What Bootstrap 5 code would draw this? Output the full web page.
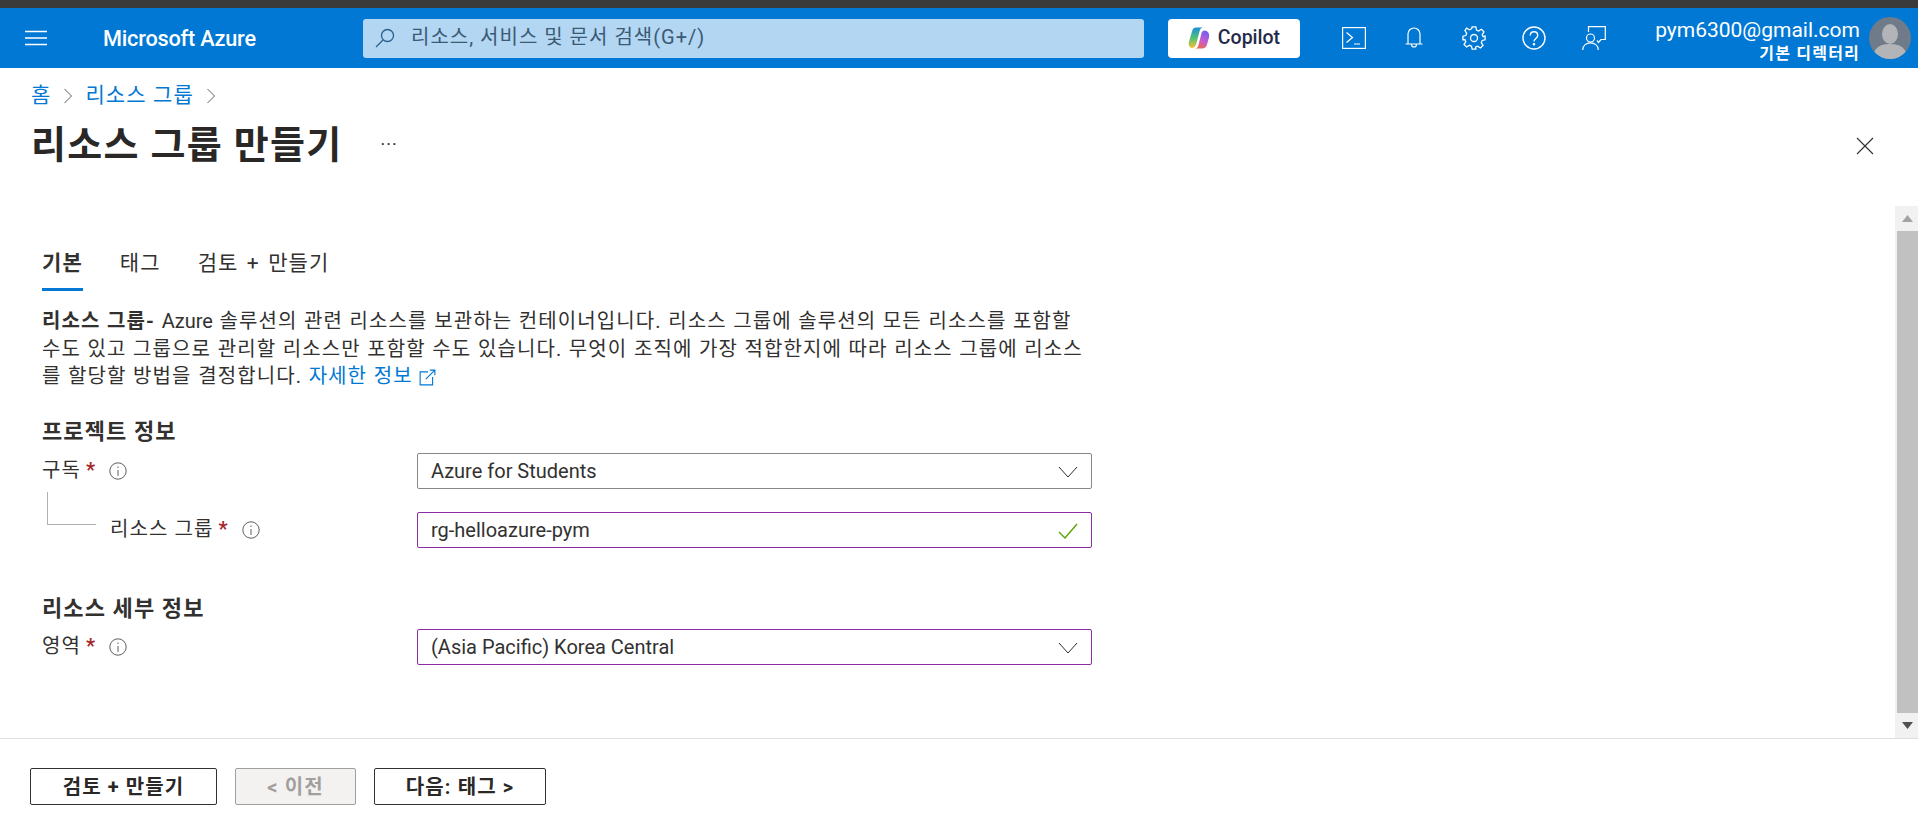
<!DOCTYPE html>
<html lang="ko">
<head>
    <meta charset="UTF-8">
    <meta name="viewport" content="width=device-width, initial-scale=1.0">
    <title>리소스 그룹 만들기</title>
    <link href="https://cdn.jsdelivr.net/npm/bootstrap@5.3.3/dist/css/bootstrap.min.css" rel="stylesheet">
    <style>
        html, body { height: 100%; overflow: hidden; }
        body {
            font-family: Roboto, "Noto Sans CJK KR", sans-serif;
            font-size: 20px;
            letter-spacing: 1.1px;
            line-height: 27.5px;
            color: #323130;
            background: #fff;
            border-top: 8px solid #3a3a3a;
        }
        .az-page { height: 823px; }

        /* top bar */
        .az-bar { height: 60px; background: #0078d4; padding: 0; color: #fff; flex-wrap: nowrap; }
        .az-menu { width: 103px; padding-left: 25px; }
        .az-brand { width: 260px; font-size: 21.7px; font-weight: 500; color: #fff; padding: 2px 0 0; margin: 0; letter-spacing: -.2px; }
        .az-search {
            width: 781px; height: 39px; background: #b3d6f2; border-radius: 3px;
            padding: 0 12px; color: #3b5a75; letter-spacing: 1px;
        }
        .az-copilot {
            width: 132px; height: 39px; margin-left: 24px; background: #fff; border: 0; border-radius: 4px;
            color: #242a4a; font-size: 19.5px; font-weight: 500; padding: 0; letter-spacing: 0;
        }
        .az-tools { margin-left: 24px; gap: 0; }
        .az-tool { width: 60px; height: 60px; }
        .az-user { width: 218px; padding-right: 7px; letter-spacing: 0; }
        .az-user-text { line-height: 23px; margin-right: 9px; padding-top: 7px; }
        .az-mail { font-size: 21px; }
        .az-dir { font-size: 16px; font-weight: 700; letter-spacing: 1.2px; }
        .az-avatar { width: 42px; height: 42px; border-radius: 50%; overflow: hidden; }

        /* title block */
        .az-head { height: 138px; padding: 14px 31px 0; position: relative; }
        .az-crumbs { margin: 0; font-size: 21px; }
        .az-crumbs a, .az-more-link { color: #0078d4; text-decoration: none; }
        .az-sep { margin: 0 12px; }
        .az-title { font-size: 38px; font-weight: 700; line-height: 44px; margin: 13px 0 0; color: #292827; letter-spacing: 1.3px; }
        .az-dots { margin-left: 38px; font-size: 18px; font-weight: 400; color: #323130; letter-spacing: 1px; }
        .az-close { position: absolute; right: 44px; top: 69px; }

        /* scrolling part */
        .az-scroll { height: 532px; }
        .az-body { padding: 0 0 0 42px; width: 1092px; flex: none; }
        .az-tabs { padding-top: 44px; gap: 37px; height: 85px; margin-bottom: 17px; font-size: 21px; word-spacing: 2px; }
        .az-tab { color: #323130; height: 41px; }
        .az-tab-on { font-weight: 700; border-bottom: 3px solid #0078d4; height: 41px; }
        .az-intro { margin: 0; width: 1048px; word-spacing: .5px; }
        .az-latin { letter-spacing: 0; }
        .az-section { font-size: 22px; font-weight: 700; margin: 0; line-height: 27.5px; color: #323130; letter-spacing: 1.1px; }
        .az-section-1 { margin-top: 27px; margin-bottom: 8px; }
        .az-section-2 { margin-top: 47px; margin-bottom: 6px; }
        .az-line { display: flex; align-items: center; }
        .az-line-2 { margin-top: 23px; }
        .az-label { width: 375px; flex: none; display: flex; align-items: center; gap: 5px; }
        .az-star { color: #a4262c; font-weight: 700; margin-right: 9px; letter-spacing: 0; }
        .az-field {
            width: 675px; height: 36px; border: 1px solid #8a8886; border-radius: 2px;
            color: #323130; padding: 0 13px; line-height: 34px; position: relative; background: #fff; letter-spacing: 0;
        }
        .az-valid { border-color: #8a2da5; }
        .az-field svg { position: absolute; right: 13px; top: 9px; }
        .az-child { padding-left: 68px; }
        .az-tree { position: relative; }
        .az-tree::before {
            content: ""; position: absolute; left: 5px; top: -20px; width: 49px; height: 33px;
            border-left: 1px solid #b3b0ad; border-bottom: 1px solid #b3b0ad;
        }
        .az-rail { width: 23px; margin-left: auto; background: #f1f1f1; flex: none; padding-left: 2px; }
        .az-thumb { flex: 1; background: #c1c1c1; }
        .az-arrow { height: 25px; }

        /* footer */
        .az-foot { border-top: 1px solid #e1dfdd; padding: 29px 30px 0; gap: 18px; height: 85px; }
        .az-btn {
            height: 37px; padding: 0; font-size: 20px; font-weight: 700; color: #292827; letter-spacing: 1.1px;
            border: 1px solid #323130; border-radius: 2px; line-height: 34px; background: #fff;
        }
        .az-btn:disabled { background: #f3f2f1; color: #a19f9d; border-color: #a19f9d; opacity: 1; }
        .az-w1 { width: 187px; }
        .az-w2 { width: 121px; }
        .az-w3 { width: 172px; }
    </style>
</head>
<body>
<div class="az-page d-flex flex-column">
    <nav class="navbar az-bar">
        <div class="az-menu d-flex align-items-center">
            <svg width="22" height="16" viewBox="0 0 22 16" fill="none" stroke="#fff" stroke-width="1.4"><path d="M0 1.500h22M0 8h22M0 14.500h22"/></svg>
        </div>
        <div class="az-brand">Microsoft Azure</div>
        <div class="az-search d-flex align-items-center gap-2">
            <svg width="20" height="20" viewBox="0 0 20 20" fill="none" stroke="#2b5f8a" stroke-width="1.3"><circle cx="12.500" cy="7.500" r="6"/><path d="M8 12 1 19"/></svg>
            <span class="ms-2">리소스, 서비스 및 문서 검색(G+/)</span>
        </div>
        <button class="az-copilot d-flex align-items-center justify-content-center gap-2" type="button">
            <svg width="22" height="22" viewBox="0 0 22 22">
                <defs>
                    <linearGradient id="cpA" x1="0" y1="0" x2="0" y2="1"><stop offset="0" stop-color="#1b8fd8"/><stop offset=".5" stop-color="#4fc07a"/><stop offset="1" stop-color="#f5c330"/></linearGradient>
                    <linearGradient id="cpB" x1=".7" y1="0" x2=".3" y2="1"><stop offset="0" stop-color="#6b62ea"/><stop offset=".55" stop-color="#c85bd0"/><stop offset="1" stop-color="#f0684a"/></linearGradient>
                </defs>
                <path fill="url(#cpA)" d="M8 .5h7c-1.800.4-2.800 1.500-3.300 3.200L8.500 16c-.6 2.800-2 5-4.500 5-2.500 0-4-3-3-6.500L4 4.500C4.600 2 6 .5 8 .5z"/>
                <path fill="url(#cpB)" d="M13.500 6c.5-1.500 1.500-2.500 3-2.500 3 0 5.500 3 4.500 7l-2 7c-.7 2.500-2.500 4-5 4H7c2 0 3-1.500 3.500-3.500z"/>
            </svg>
            Copilot
        </button>
        <div class="az-tools d-flex">
            <div class="az-tool d-flex align-items-center justify-content-center">
                <svg width="24" height="22" viewBox="0 0 24 22" fill="none" stroke="#fff" stroke-width="1.2"><rect x=".6" y=".6" width="22.800" height="20.800"/><path d="m4.500 5.500 6 5-6 5M12 17h6"/></svg>
            </div>
            <div class="az-tool d-flex align-items-center justify-content-center">
                <svg width="18" height="22" viewBox="0 0 18 22" fill="none" stroke="#fff" stroke-width="1.200"><path d="M3 16.500V7a6 6 0 0 1 12 0v9.500M.5 17h17M6.500 17.500c0 3.300 5 3.300 5 0"/></svg>
            </div>
            <div class="az-tool d-flex align-items-center justify-content-center">
                <svg width="24" height="24" viewBox="0 0 26 26" fill="none" stroke="#fff" stroke-width="1.400"><circle cx="13" cy="13" r="3.800"/><path d="M11 1h4l.7 3.400 2.300 1 3-1.900 2.800 2.800-1.900 3 1 2.300L25 11v4l-3.100.7-1 2.300 1.900 3-2.800 2.800-3-1.900-2.300 1L15 25h-4l-.7-3.100-2.300-1-3 1.900-2.800-2.800 1.900-3-1-2.300L1 15v-4l3.100-.7 1-2.300-1.900-3L5 2.200l3 1.900 2.300-1z"/></svg>
            </div>
            <div class="az-tool d-flex align-items-center justify-content-center">
                <svg width="24" height="24" viewBox="0 0 24 24" fill="none" stroke="#fff" stroke-width="1.400"><circle cx="12" cy="12" r="11"/><path d="M8.300 9.500c0-5 7.400-5 7.400 0 0 3-3.700 3-3.700 6"/><circle cx="12" cy="18.300" r=".6" fill="#fff"/></svg>
            </div>
            <div class="az-tool d-flex align-items-center justify-content-center">
                <svg width="24" height="24" viewBox="0 0 24 24" fill="none" stroke="#fff" stroke-width="1.200"><path d="M6.500 6V.7h16.800v12.800H19l-2.500 3-1.500-2.200"/><circle cx="8.500" cy="12" r="4"/><path d="M.7 24c0-9.500 15.600-9.500 15.600 0"/></svg>
            </div>
        </div>
        <div class="az-user d-flex align-items-center justify-content-end ms-auto">
            <div class="az-user-text text-end">
                <div class="az-mail">pym6300@gmail.com</div>
                <div class="az-dir">기본 디렉터리</div>
            </div>
            <div class="az-avatar flex-shrink-0">
                <svg width="42" height="42" viewBox="0 0 42 42"><rect width="42" height="42" fill="#6f7b89"/><ellipse cx="21" cy="17" rx="8" ry="10" fill="#b2b4b7"/><path d="M4 42c0-12 8-15 17-15s17 3 17 15z" fill="#b2b4b7"/></svg>
            </div>
        </div>
    </nav>

    <header class="az-head">
        <nav aria-label="breadcrumb" class="az-crumbs d-flex align-items-center">
            <a href="#">홈</a>
            <svg class="az-sep" width="10" height="16" viewBox="0 0 10 16" fill="none" stroke="#605e5c"><path d="m1.500 1 7 7-7 7"/></svg>
            <a href="#">리소스 그룹</a>
            <svg class="az-sep" width="10" height="16" viewBox="0 0 10 16" fill="none" stroke="#605e5c"><path d="m1.500 1 7 7-7 7"/></svg>
        </nav>
        <h1 class="az-title d-flex align-items-center">리소스 그룹 만들기<span class="az-dots">···</span></h1>
        <svg class="az-close" width="18" height="18" viewBox="0 0 18 18" fill="none" stroke="#323130" stroke-width="1.100"><path d="m1 1 16 16M17 1 1 17"/></svg>
    </header>

    <div class="az-scroll d-flex">
        <main class="az-body">
            <div class="az-tabs d-flex">
                <div class="az-tab-on">기본</div>
                <div class="az-tab">태그</div>
                <div class="az-tab">검토 + 만들기</div>
            </div>
            <p class="az-intro"><strong>리소스 그룹-</strong> <span class="az-latin">Azure</span> 솔루션의 관련 리소스를 보관하는 컨테이너입니다. 리소스 그룹에 솔루션의 모든 리소스를 포함할 수도 있고 그룹으로 관리할 리소스만 포함할 수도 있습니다. 무엇이 조직에 가장 적합한지에 따라 리소스 그룹에 리소스를 할당할 방법을 결정합니다. <a class="az-more-link" href="#">자세한 정보 <svg width="17" height="17" viewBox="0 0 15 15" fill="none" stroke="#0078d4"><path d="M8 2.500H1v11.500h11V7M6 9l8-8M9.500 1H14v4.500"/></svg></a></p>

            <h2 class="az-section az-section-1">프로젝트 정보</h2>
            <div class="az-line">
                <div class="az-label">구독<span class="az-star">*</span>
                    <svg width="18" height="18" viewBox="0 0 18 18" fill="none" stroke="#605e5c"><circle cx="9" cy="9" r="8.200"/><path d="M9 8v6M9 4.500v1.500"/></svg>
                </div>
                <div class="az-field">Azure for Students
                    <svg width="20" height="18" viewBox="0 0 20 18" fill="none" stroke="#323130"><path d="m1 4 9 10 9-10"/></svg>
                </div>
            </div>
            <div class="az-line az-line-2 az-tree">
                <div class="az-label az-child">리소스 그룹<span class="az-star">*</span>
                    <svg width="18" height="18" viewBox="0 0 18 18" fill="none" stroke="#605e5c"><circle cx="9" cy="9" r="8.200"/><path d="M9 8v6M9 4.500v1.500"/></svg>
                </div>
                <div class="az-field az-valid">rg-helloazure-pym
                    <svg width="20" height="18" viewBox="0 0 20 18" fill="none" stroke="#57a300" stroke-width="1.400"><path d="m1 10 6 6L19 2"/></svg>
                </div>
            </div>

            <h2 class="az-section az-section-2">리소스 세부 정보</h2>
            <div class="az-line">
                <div class="az-label">영역<span class="az-star">*</span>
                    <svg width="18" height="18" viewBox="0 0 18 18" fill="none" stroke="#605e5c"><circle cx="9" cy="9" r="8.200"/><path d="M9 8v6M9 4.500v1.500"/></svg>
                </div>
                <div class="az-field az-valid">(Asia Pacific) Korea Central
                    <svg width="20" height="18" viewBox="0 0 20 18" fill="none" stroke="#323130"><path d="m1 4 9 10 9-10"/></svg>
                </div>
            </div>
        </main>
        <div class="az-rail d-flex flex-column">
            <div class="az-arrow d-flex align-items-center justify-content-center"><svg width="11" height="7" viewBox="0 0 11 7"><path d="M5.500 0 11 7H0z" fill="#a3a3a3"/></svg></div>
            <div class="az-thumb"></div>
            <div class="az-arrow d-flex align-items-center justify-content-center"><svg width="11" height="7" viewBox="0 0 11 7"><path d="M0 0h11L5.500 7z" fill="#505050"/></svg></div>
        </div>
    </div>

    <footer class="az-foot d-flex">
        <button class="btn az-btn az-w1" type="button">검토 + 만들기</button>
        <button class="btn az-btn az-w2" type="button" disabled>&lt; 이전</button>
        <button class="btn az-btn az-w3" type="button">다음: 태그 &gt;</button>
    </footer>
</div>
</body>
</html>
